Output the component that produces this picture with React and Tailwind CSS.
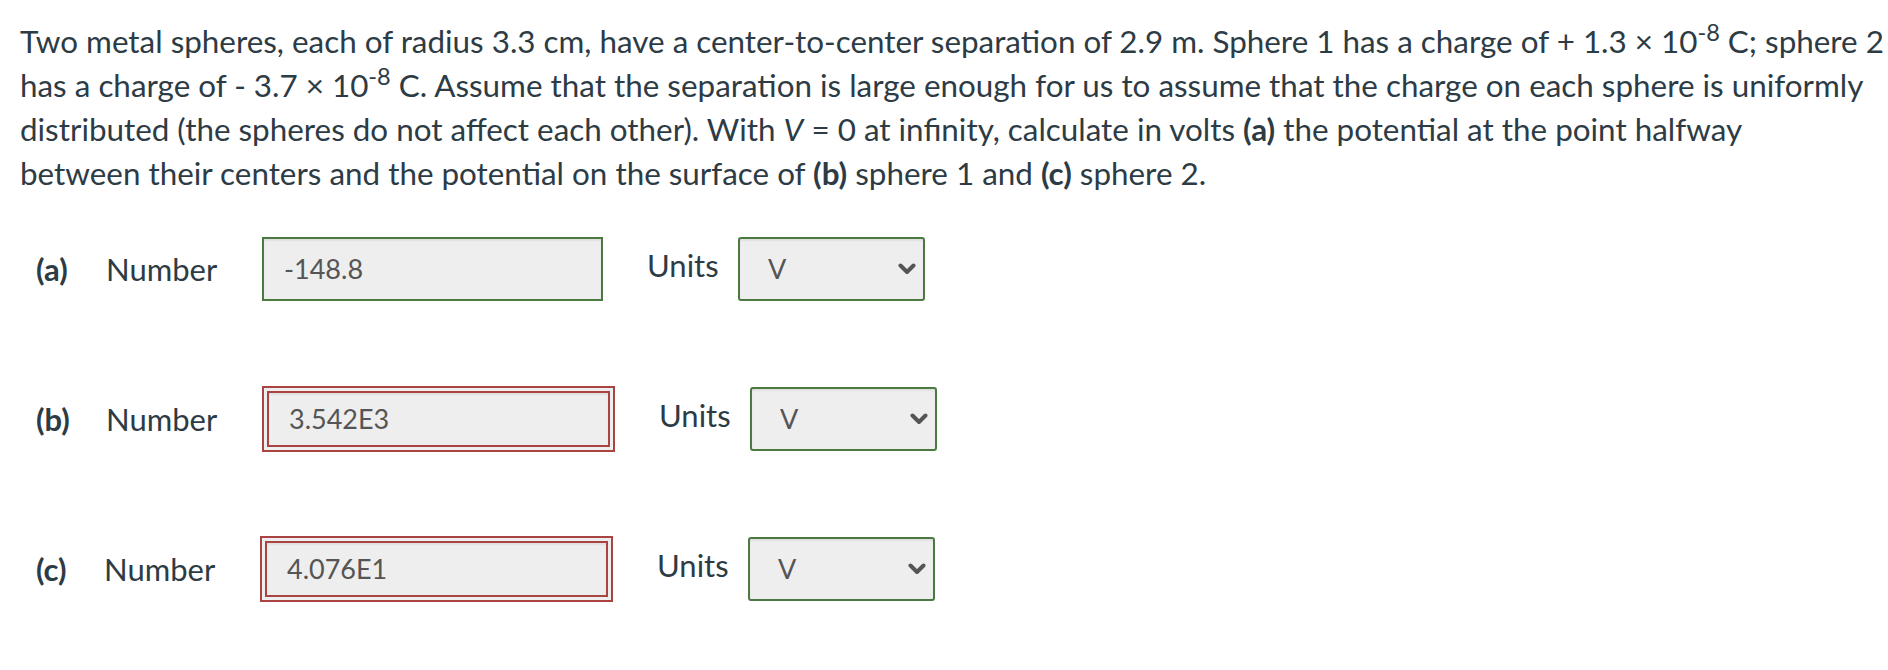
import React from "react";

const font = { fontFamily: "Lato, 'Open Sans', sans-serif" };

const Chevron = () => (
  <svg width="18" height="12" viewBox="0 0 18 12" className="shrink-0">
    <path d="M2.5 2.5 L9 9 L15.5 2.5" fill="none" stroke="#555555" strokeWidth="4" strokeLinecap="round" strokeLinejoin="round" />
  </svg>
);

const UnitSelect = () => (
  <div className="h-[64px] w-[187px] rounded-[3px] border-2 border-[#4a7a3f] bg-[#eeeeee] shadow-[inset_0_2px_2px_rgba(0,0,0,0.06)] flex items-center justify-between pl-[28px] pr-[7px]">
    <span className="text-[27px] text-[#555555]">V</span>
    <Chevron />
  </div>
);

const Row = ({ label, value, wrong, labelW = "w-[70px]" }) => (
  <div className="flex items-center h-[66px] pl-[16px]">
    <span className={`${labelW} text-[31px] font-bold text-[#2d3b45]`}>{label}</span>
    <span className="w-[156px] text-[31px] text-[#2d3b45]">Number</span>
    {wrong ? (
      <div className="h-[66px] w-[353px] border-2 border-[#a94442] bg-[#eeeeee] p-[3px]">
        <div className="h-full w-full border-2 border-[#a94442] bg-[#eeeeee] shadow-[inset_0_2px_2px_rgba(0,0,0,0.06)] flex items-center pl-[20px]">
          <span className="text-[27px] text-[#555555]">{value}</span>
        </div>
      </div>
    ) : (
      <div className="h-[64px] w-[341px] border-2 border-[#4a7a3f] bg-[#eeeeee] shadow-[inset_0_2px_2px_rgba(0,0,0,0.06)] flex items-center pl-[20px]">
        <span className="text-[27px] text-[#555555]">{value}</span>
      </div>
    )}
    <span className="ml-[44px] mb-[8px] w-[91px] text-[31px] text-[#2d3b45]">Units</span>
    <UnitSelect />
  </div>
);

export default function App() {
  return (
    <div className="w-full h-[670px] bg-white px-[20px] pt-[19px]" style={font}>
      <p className="text-[31.4px] leading-[44px] text-[#2d3b45] whitespace-nowrap">
        Two metal spheres, each of radius 3.3 cm, have a center-to-center separation of 2.9 m. Sphere 1 has a charge of + 1.3 × 10<sup>-8</sup> C; sphere 2
        <br />
        has a charge of - 3.7 × 10<sup>-8</sup> C. Assume that the separation is large enough for us to assume that the charge on each sphere is uniformly
        <br />
        distributed (the spheres do not affect each other). With <i>V</i> = 0 at infinity, calculate in volts <b>(a)</b> the potential at the point halfway
        <br />
        between their centers and the potential on the surface of <b>(b)</b> sphere 1 and <b>(c)</b> sphere 2.
      </p>
      <div className="mt-[41px] flex flex-col gap-[84px]">
        <Row label="(a)" value="-148.8" />
        <Row label="(b)" value="3.542E3" wrong />
        <Row label="(c)" value="4.076E1" wrong labelW="w-[68px]" />
      </div>
    </div>
  );
}
